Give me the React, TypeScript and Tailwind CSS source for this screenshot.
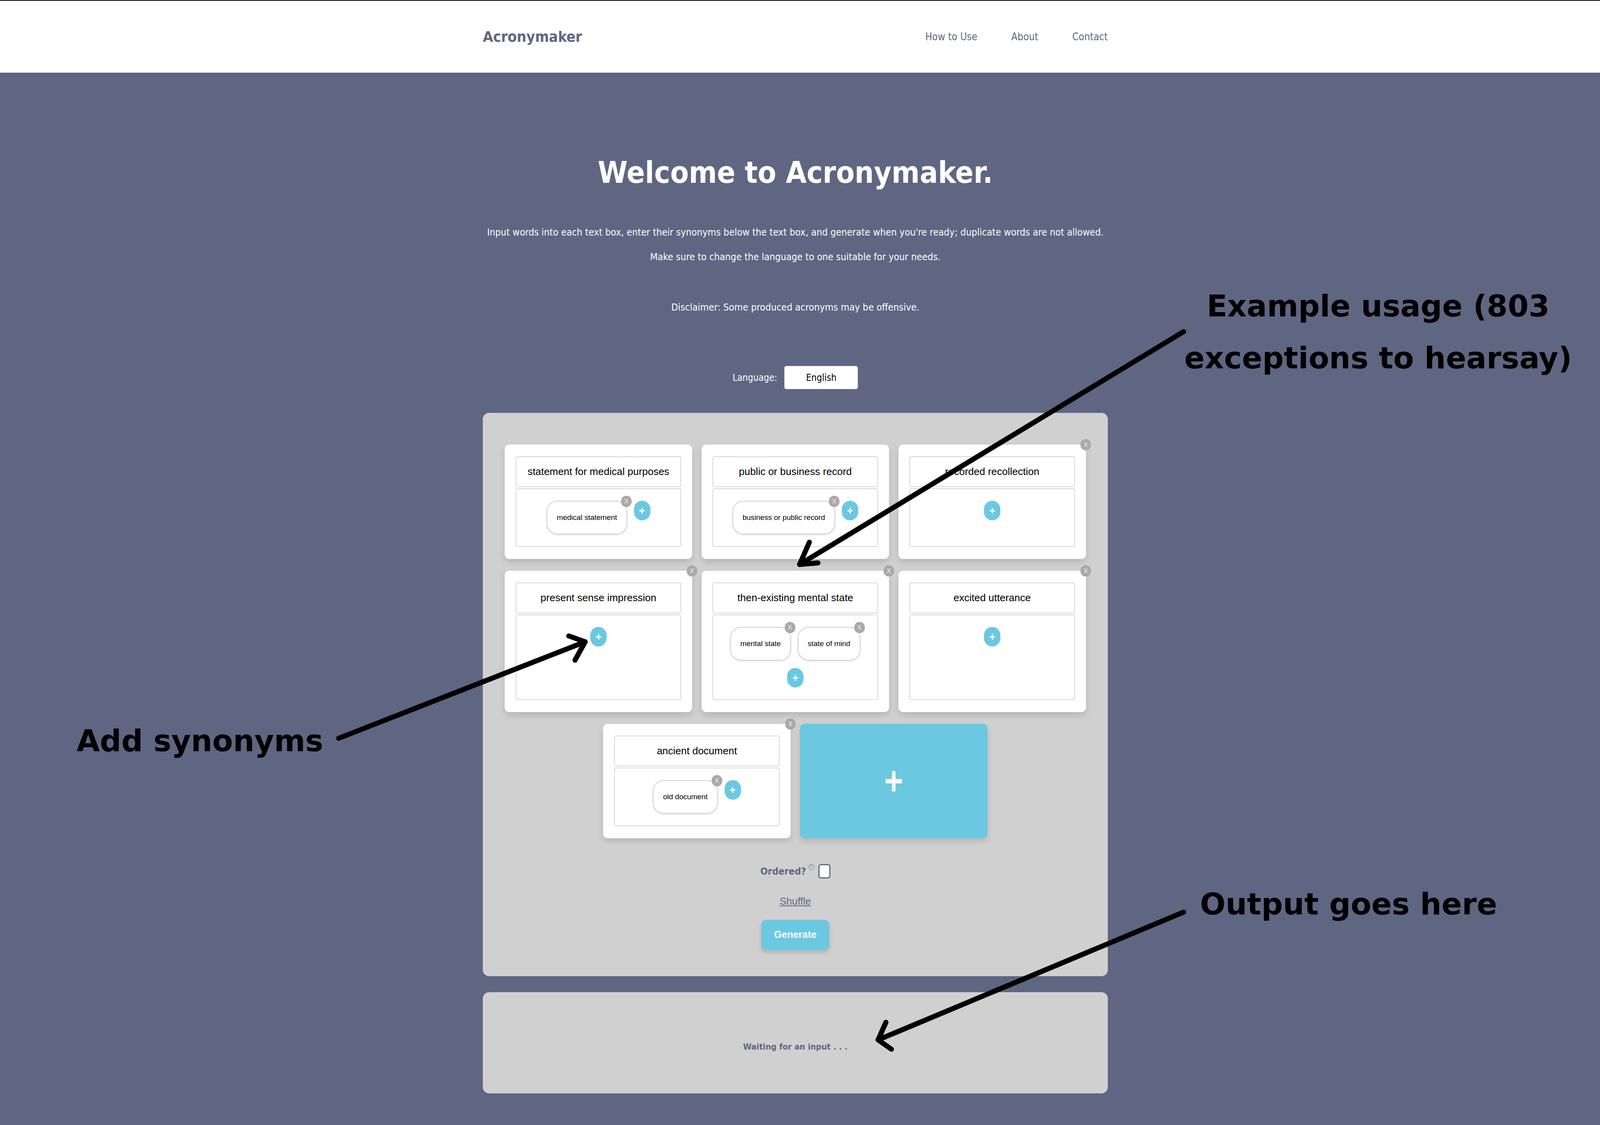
import React from "react";

type Card = { title: string; syns: string[]; removable: boolean };

const cards: Card[] = [
  { title: "statement for medical purposes", syns: ["medical statement"], removable: false },
  { title: "public or business record", syns: ["business or public record"], removable: false },
  { title: "recorded recollection", syns: [], removable: true },
  { title: "present sense impression", syns: [], removable: true },
  { title: "then-existing mental state", syns: ["mental state", "state of mind"], removable: true },
  { title: "excited utterance", syns: [], removable: true },
  { title: "ancient document", syns: ["old document"], removable: true },
];

const arial = "font-['Liberation_Sans',Arial,sans-serif]";

function RemoveDot({ className }: { className: string }) {
  return (
    <span
      className={`absolute flex h-[29px] w-[27px] items-center justify-center rounded-full bg-[#a9a9a9] text-[16px] leading-none text-[#f2f2f2] ${arial} ${className}`}
    >
      X
    </span>
  );
}

function AddDot() {
  return (
    <button className="flex h-[50px] w-[42px] shrink-0 items-center justify-center rounded-full bg-[#6bc8e1]">
      <svg width="15" height="17" viewBox="0 0 18 18" preserveAspectRatio="none">
        <path d="M9 1v16M1 9h16" stroke="#fff" strokeWidth="3.5" />
      </svg>
    </button>
  );
}

function WordCard({ card }: { card: Card }) {
  return (
    <div className="relative flex w-[480px] flex-col rounded-[12px] bg-white px-[28px] pt-[30px] pb-[31px] shadow-[0_8px_16px_rgba(0,0,0,0.13)]">
      {card.removable ? <RemoveDot className="-top-[14px] -right-[13px]" /> : null}
      <div className={`flex h-[79px] items-center justify-center rounded-[5px] border-2 border-[#d6d6d6] text-[26px] text-black ${arial}`}>
        {card.title}
      </div>
      <div className="mt-[3px] flex min-h-[150px] flex-1 flex-wrap content-start items-start justify-center gap-x-[17px] gap-y-[19px] rounded-[5px] border-2 border-[#d6d6d6] px-[24px] py-[30px]">
        {card.syns.map((s) => (
          <div
            key={s}
            className={`relative flex h-[86px] items-center rounded-[28px] border-2 border-[#d2d2d2] px-[24px] text-[19px] text-black shadow-[0_2px_4px_rgba(0,0,0,0.12)] ${arial}`}
          >
            {s}
            <RemoveDot className="-top-[15px] -right-[13px]" />
          </div>
        ))}
        <AddDot />
      </div>
    </div>
  );
}

export default function App() {
  return (
    <div className="relative min-h-screen w-full overflow-hidden bg-[#5f6682] font-['DejaVu_Sans_Condensed','DejaVu_Sans',sans-serif]">
      <header className="h-[186px] border-t-2 border-black bg-white">
        <div className="pr-[24px]">
          <div className="mx-auto flex h-[184px] w-[1600px] items-center justify-between">
            <span className="text-[38px] font-bold text-[#5f6682]">Acronymaker</span>
            <nav className="flex gap-[87px] text-[26px] text-[#5f6682]">
              <a>How to Use</a>
              <a>About</a>
              <a>Contact</a>
            </nav>
          </div>
        </div>
      </header>

      <main className="pr-[24px] pb-[82px]">
        <div className="mx-auto flex w-[1600px] flex-col items-center text-white">
          <h1 className="mt-[197px] text-[77px] leading-[118px] font-bold">Welcome to Acronymaker.</h1>
          <p className="mt-[77px] text-[25px] leading-[34px] whitespace-nowrap">
            Input words into each text box, enter their synonyms below the text box, and generate when you're ready; duplicate words are not allowed.
          </p>
          <p className="mt-[29px] text-[25px] leading-[34px]">Make sure to change the language to one suitable for your needs.</p>
          <p className="mt-[95px] text-[25px] leading-[34px]">Disclaimer: Some produced acronyms may be offensive.</p>

          <div className="mt-[133px] flex items-center gap-[19px]">
            <span className="text-[24px]">Language:</span>
            <div className="flex h-[59px] w-[188px] items-center justify-center rounded-[5px] bg-white text-[24px] text-black">
              English
            </div>
          </div>

          <section className="mt-[61px] flex w-full flex-col items-center rounded-[16px] bg-[#d0d0d0] px-[56px] pt-[81px] pb-[67px]">
            <div className="flex flex-wrap justify-center gap-x-[24px] gap-y-[30px]">
              {cards.map((c) => (
                <WordCard key={c.title} card={c} />
              ))}
              <button className="flex min-h-[293px] w-[480px] items-center justify-center rounded-[12px] bg-[#6bc8e1] shadow-[0_8px_16px_rgba(0,0,0,0.13)]">
                <svg width="42" height="52" viewBox="0 0 52 52" preserveAspectRatio="none">
                  <path d="M26 0v52M0 26h52" stroke="#fff" strokeWidth="11" />
                </svg>
              </button>
            </div>

            <div className="mt-[66px] flex items-center text-[#5f6682]">
              <span className="text-[25px] font-bold">Ordered?</span>
              <span className="ml-[6px] -mt-[22px] flex h-[16px] w-[15px] items-center justify-center rounded-full border border-[#5f6682] text-[11px] leading-none">
                ?
              </span>
              <span className="ml-[10px] h-[37px] w-[31px] rounded-[7px] border-[3px] border-[#5f6682] bg-white" />
            </div>
            <a className={`mt-[38px] text-[26px] text-[#5f6682] underline ${arial}`}>Shuffle</a>
            <button className={`mt-[28px] h-[77px] w-[174px] rounded-[12px] bg-[#6bc8e1] text-[25px] font-bold text-white shadow-[0_6px_12px_rgba(0,0,0,0.15)] ${arial}`}>
              Generate
            </button>
          </section>

          <section className="mt-[41px] flex h-[259px] w-full items-center justify-center rounded-[16px] bg-[#d0d0d0]">
            <span className="mt-[20px] text-[22px] font-bold text-[#5f6682]">Waiting for an input . . .</span>
          </section>
        </div>
      </main>

      {/* annotations drawn over the screenshot */}
      <svg className="pointer-events-none absolute top-0 left-0" width="4096" height="2880" viewBox="0 0 4096 2880">
        <g fill="none" stroke="#000" strokeWidth="13" strokeLinecap="round" strokeLinejoin="round">
          <path d="M3030 849 L2047 1445" />
          <path d="M2072 1388 L2047 1445 L2094 1441" />
          <path d="M867 1890 L1498 1643" />
          <path d="M1456 1628 L1498 1643 L1472 1690" />
          <path d="M3030 2335 L2248 2662" />
          <path d="M2268 2617 L2248 2662 L2282 2686" />
        </g>
      </svg>
      <div className="pointer-events-none absolute top-[717px] left-[2928px] w-[1200px] text-center font-['DejaVu_Sans',sans-serif] text-[77px] leading-[133px] font-bold text-black">
        Example usage (803
        <br />
        exceptions to hearsay)
      </div>
      <div className="pointer-events-none absolute top-[1830px] left-[196px] font-['DejaVu_Sans',sans-serif] text-[77px] leading-[133px] font-bold text-black">
        Add synonyms
      </div>
      <div className="pointer-events-none absolute top-[2248px] left-[3072px] font-['DejaVu_Sans',sans-serif] text-[77px] leading-[133px] font-bold text-black">
        Output goes here
      </div>
    </div>
  );
}
